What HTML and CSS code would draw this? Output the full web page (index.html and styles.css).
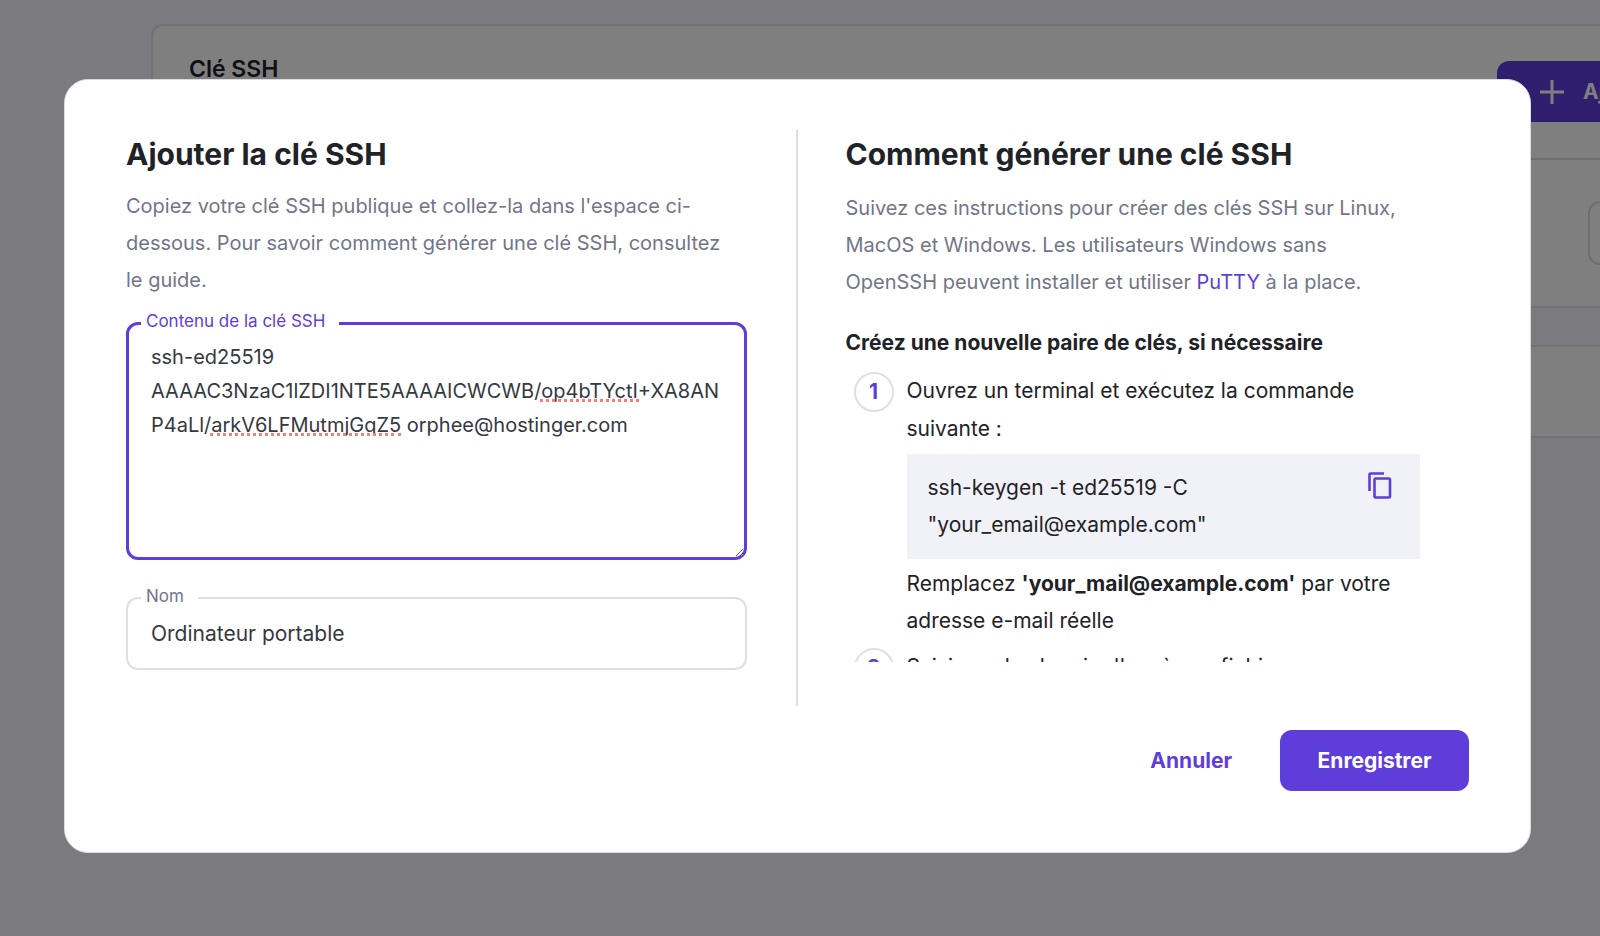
FILE: index.html
```html
<!DOCTYPE html>
<html lang="fr">
<head>
<meta charset="utf-8">
<title>Clé SSH</title>
<link rel="stylesheet" href="styles.css">
</head>
<body>
<main class="page">
  <section class="card">
    <header class="card-header">
      <h1 class="card-title">Clé SSH</h1>
      <button class="add-button" type="button">
        <svg class="add-icon" viewBox="0 0 24 24" aria-hidden="true"><path d="M12 0v24M0 12h24"/></svg>
        Ajouter
      </button>
    </header>
    <div class="card-row">
      <button class="row-button" type="button" aria-label="Gérer"></button>
    </div>
  </section>
  <section class="card card-small"></section>
</main>

<div class="overlay">
  <form class="modal" role="dialog" aria-labelledby="dialog-title">
    <div class="columns">
      <section class="column-form">
        <h2 class="title" id="dialog-title">Ajouter la clé SSH</h2>
        <p class="intro">Copiez votre clé SSH publique et collez-la dans l'espace ci-<br>dessous. Pour savoir comment générer une clé SSH, consultez<br>le guide.</p>
        <div class="field field-active">
          <label class="field-label" for="key">Contenu de la clé SSH</label>
          <textarea class="control key-input" id="key" spellcheck="false">ssh-ed25519
AAAAC3NzaC1lZDI1NTE5AAAAICWCWB/op4bTYctI+XA8AN
P4aLl/arkV6LFMutmjGqZ5 orphee@hostinger.com</textarea>
          <span class="squiggle squiggle-first"></span>
          <span class="squiggle squiggle-second"></span>
        </div>
        <div class="field">
          <label class="field-label" for="name">Nom</label>
          <input class="control name-input" id="name" type="text" value="Ordinateur portable">
        </div>
      </section>

      <section class="column-guide">
        <div class="guide-scroll">
          <h2 class="title">Comment générer une clé SSH</h2>
          <p class="intro">Suivez ces instructions pour créer des clés SSH sur Linux, MacOS et Windows. Les utilisateurs Windows sans OpenSSH peuvent installer et utiliser <a class="link" href="#putty">PuTTY</a> à la place.</p>
          <h3 class="subtitle">Créez une nouvelle paire de clés, si nécessaire</h3>
          <ol class="steps">
            <li class="step">
              <span class="step-number">1</span>
              <div class="step-body">
                <p class="step-text">Ouvrez un terminal et exécutez la commande suivante :</p>
                <div class="code">
                  <code class="code-text">ssh-keygen -t ed25519 -C "your_email@example.com"</code>
                  <button class="copy-button" type="button" aria-label="Copier">
                    <svg class="copy-icon" viewBox="0 0 24 27" aria-hidden="true"><path d="M1.5 19V2.5a1 1 0 0 1 1-1H16"/><rect x="6.5" y="6.5" width="15.5" height="19" rx="1.2"/></svg>
                  </button>
                </div>
                <p class="step-note">Remplacez <strong>'your_mail@example.com'</strong> par votre adresse e-mail réelle</p>
              </div>
            </li>
            <li class="step">
              <span class="step-number">2</span>
              <div class="step-body">
                <p class="step-text">Saisissez le chemin d'accès au fichier</p>
              </div>
            </li>
          </ol>
        </div>
      </section>
    </div>
    <footer class="actions">
      <button class="cancel" type="button">Annuler</button>
      <button class="save" type="submit">Enregistrer</button>
    </footer>
  </form>
</div>
</body>
</html>
```
FILE: styles.css
```css
* {
  box-sizing: border-box;
}

body {
  margin: 0;
  min-height: 100vh;
  background: #f7f5ff;
  color: #1f2227;
  font-family: Inter, "Open Sans", sans-serif;
  font-size: 21px;
}

h1, h2, h3, p, ol {
  margin: 0;
  padding: 0;
}

button, input, textarea {
  font: inherit;
  color: inherit;
}

button {
  cursor: pointer;
}

/* Page behind the dialog */
.page {
  display: flex;
  flex-direction: column;
  gap: 37px;
  padding: 24px 0 0 151px;
  overflow: hidden;
}

.card {
  margin-right: -200px;
  border: 2px solid #e4e4ea;
  border-radius: 12px;
  background: #fff;
}

.card-small {
  height: 93px;
}

.card-header {
  display: flex;
  justify-content: space-between;
  align-items: flex-start;
  padding: 35px 36px 36px;
  border-bottom: 2px solid #dcdce0;
}

.card-title {
  font-size: 23px;
  font-weight: 600;
  line-height: 16px;
}

.add-button {
  display: flex;
  align-items: center;
  gap: 19px;
  min-width: 265px;
  height: 61px;
  padding: 0 43px;
  border: 0;
  border-radius: 12px;
  background: #5f3dda;
  color: #fff;
  font-weight: 700;
}

.add-icon {
  width: 24px;
  height: 24px;
  fill: none;
  stroke: currentColor;
  stroke-width: 3;
}

.card-row {
  display: flex;
  justify-content: flex-end;
  padding: 41px 36px;
}

.row-button {
  width: 174px;
  height: 64px;
  border: 2px solid #dcdce0;
  border-radius: 12px;
  background: none;
}

/* Dialog */
.overlay {
  position: fixed;
  inset: 0;
  display: flex;
  align-items: flex-start;
  padding: 79px 69px 82px 64px;
  background: rgba(0, 0, 0, 0.5);
}

.modal {
  flex: 1;
  padding: 50px 61px 61px;
  border: 1px solid #dcdce0;
  border-radius: 24px;
  background: #fff;
}

.columns {
  display: grid;
  grid-template-columns: calc(50% - 2px) 1fr;
}

.column-form {
  padding: 4px 49px 36px 0;
}

.column-guide {
  padding: 4px 0 44px 48px;
  border-left: 2px solid #dfdfe2;
}

.guide-scroll {
  height: 528px;
  padding-right: 49px;
  overflow: hidden;
}

.title {
  font-size: 30px;
  font-weight: 700;
  line-height: 40px;
}

.intro {
  margin-top: 14px;
  color: #727586;
  font-size: 20px;
  line-height: 37px;
}

.column-guide .intro {
  margin-top: 16px;
}

.link {
  color: #5f3dda;
  text-decoration: none;
}

.field {
  position: relative;
  margin-top: 23px;
}

.field + .field {
  margin-top: 37px;
}

.field-label {
  position: absolute;
  top: -12px;
  left: 15px;
  padding: 0 14px 0 5px;
  background: #fff;
  color: #727586;
  font-size: 17px;
  line-height: 22px;
}

.field-active .field-label {
  color: #5f3dda;
}

.control {
  display: block;
  width: 100%;
  border: 2px solid #dfdfe2;
  border-radius: 12px;
  outline: 0;
  background: none;
  color: #36383f;
}

.key-input {
  height: 238px;
  padding: 15px 15px 15px 22px;
  border: 3px solid #5f3dda;
  font-size: 20px;
  line-height: 34px;
  resize: vertical;
  overflow: hidden;
}

.name-input {
  height: 73px;
  padding: 0 23px;
}

/* Spelling marks under the two unknown words */
.squiggle {
  position: absolute;
  border-bottom: 3px dotted #f08078;
}

.squiggle-first {
  top: 77px;
  left: 414px;
  width: 99px;
}

.squiggle-second {
  top: 111px;
  left: 84px;
  width: 191px;
}

.subtitle {
  margin-top: 24px;
  font-size: 21px;
  font-weight: 700;
  line-height: 36px;
}

.steps {
  list-style: none;
}

.step {
  display: flex;
  gap: 13px;
  padding: 11px 0 0 8px;
}

.step + .step {
  padding-top: 9px;
}

.step-number {
  flex: none;
  width: 40px;
  height: 40px;
  border: 2px solid #dfdfe8;
  border-radius: 50%;
  color: #5f3dda;
  font-weight: 700;
  line-height: 36px;
  text-align: center;
}

.step-body {
  flex: 1;
}

.step-text {
  line-height: 38px;
}

.code {
  display: flex;
  justify-content: space-between;
  align-items: flex-start;
  margin-top: 6px;
  padding: 15px 28px 16px 21px;
  background: #f1f2f7;
}

.code-text {
  max-width: 320px;
  font-family: inherit;
  line-height: 37px;
}

.copy-button {
  display: flex;
  padding: 3px 0;
  border: 0;
  background: none;
  color: #5f3dda;
}

.copy-icon {
  width: 24px;
  height: 27px;
  fill: none;
  stroke: currentColor;
  stroke-width: 2.6;
}

.step-note {
  margin-top: 6px;
  line-height: 37px;
}

.actions {
  display: flex;
  justify-content: flex-end;
  gap: 12px;
  margin-top: 24px;
}

.cancel, .save {
  height: 61px;
  padding: 0 36px;
  border: 0;
  border-radius: 12px;
  background: none;
  color: #5f3dda;
  font-weight: 700;
}

.save {
  min-width: 189px;
  background: #5f3dda;
  color: #fff;
}
```
